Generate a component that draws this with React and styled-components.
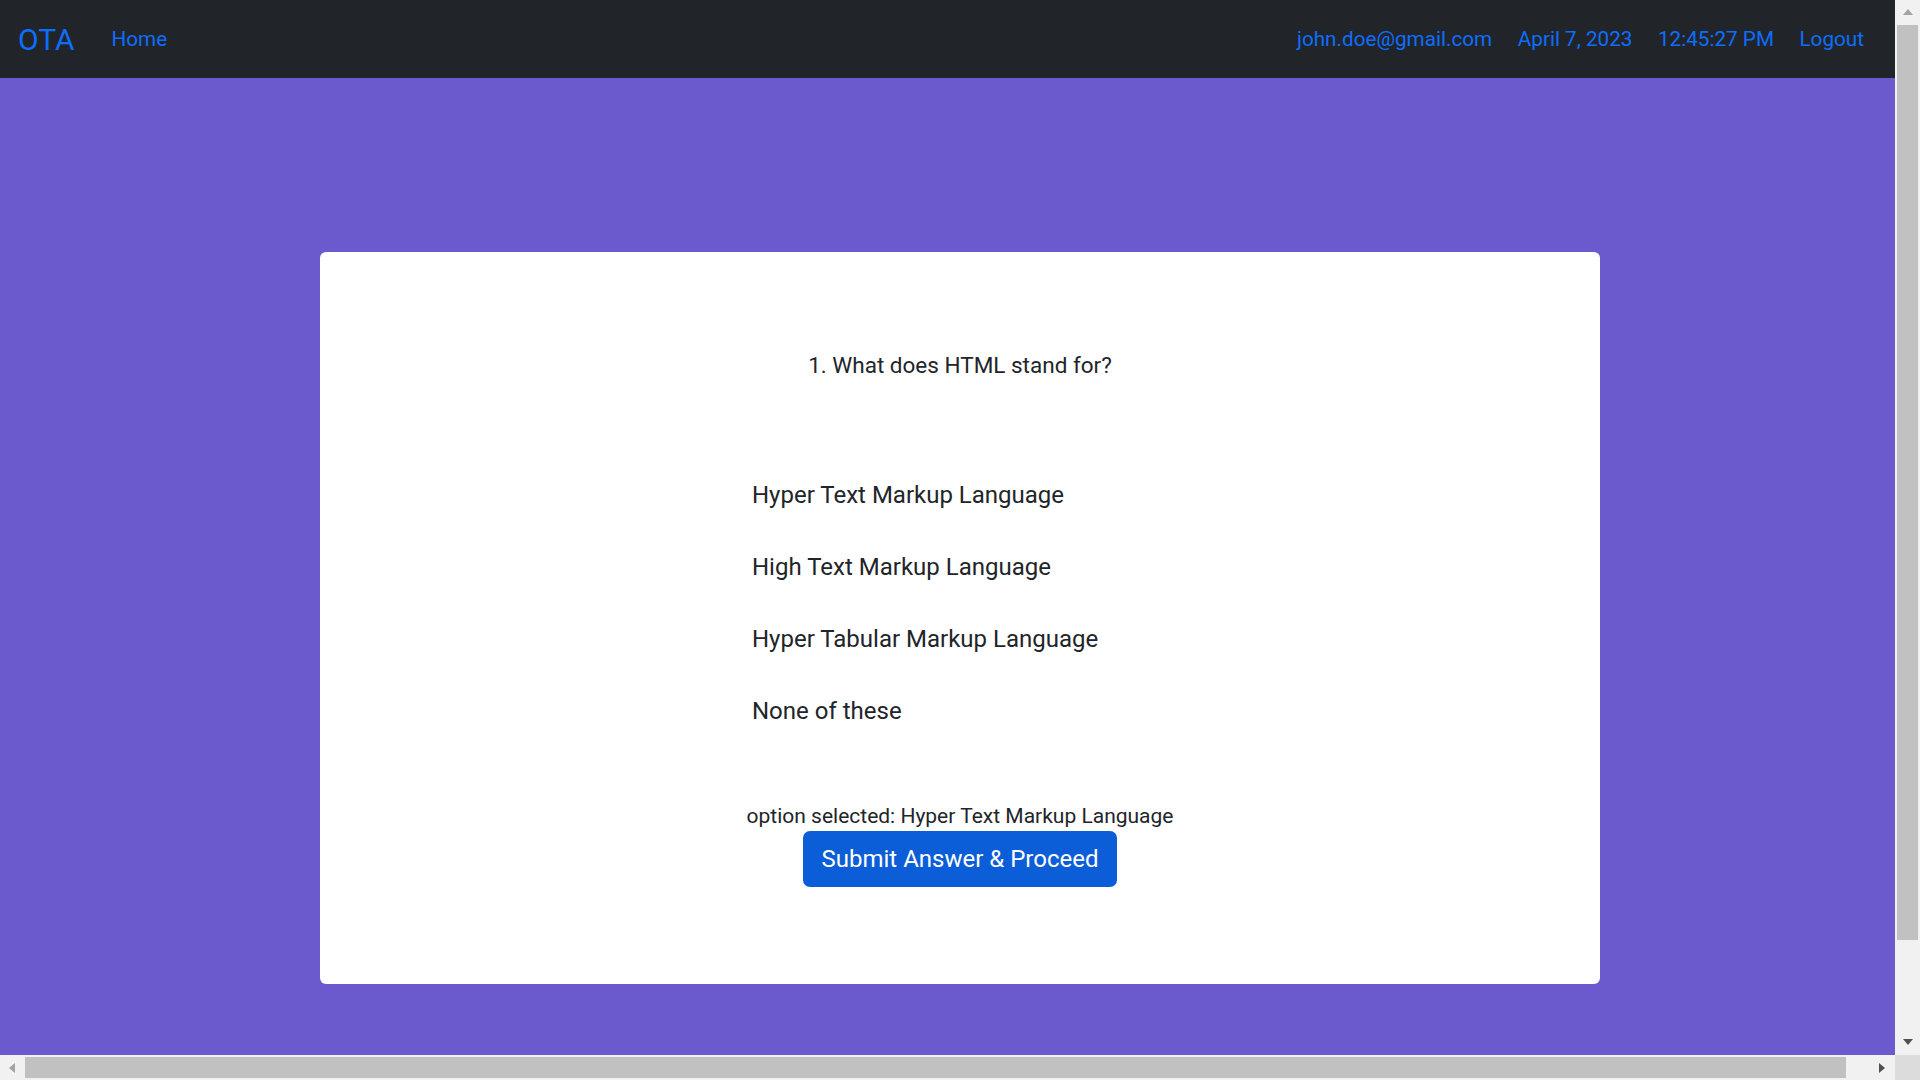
import styled, { createGlobalStyle } from 'styled-components'

const GlobalStyle = createGlobalStyle`
body {
    margin: 0;
    font-family: Roboto, "Liberation Sans", sans-serif;
    color: #212529;
}
`

// janela com barras de rolagem desenhadas (o navegador headless esconde as nativas)
const Frame = styled.div`
display: grid;
grid-template-columns: 1fr 25px;
grid-template-rows: 1fr 25px;
width: 100vw;
height: 100vh;
overflow: hidden;
`
const Viewport = styled.div`
overflow: hidden;
min-width: 0;
min-height: 0;
`
const VScroll = styled.div`
display: flex;
flex-direction: column;
background-color: #f1f1f1;
`
const HScroll = styled.div`
display: flex;
background-color: #f1f1f1;
`
const ScrollButton = styled.div`
flex: none;
width: 25px;
height: 25px;
display: flex;
align-items: center;
justify-content: center;
margin-left: ${p => p.$end ? 'auto' : '0'};
margin-top: ${p => p.$bottom ? 'auto' : '0'};
`
const Arrow = styled.span`
width: 0;
height: 0;
${p => p.$dir === 'up' && `
    border-left: 5.5px solid transparent;
    border-right: 5.5px solid transparent;
    border-bottom: 6px solid ${p.$color};
    margin-top: -1px;
`}
${p => p.$dir === 'down' && `
    border-left: 5.5px solid transparent;
    border-right: 5.5px solid transparent;
    border-top: 6px solid ${p.$color};
    margin-top: -1px;
`}
${p => p.$dir === 'left' && `
    border-top: 5.5px solid transparent;
    border-bottom: 5.5px solid transparent;
    border-right: 6px solid ${p.$color};
    margin-left: -1px;
`}
${p => p.$dir === 'right' && `
    border-top: 5.5px solid transparent;
    border-bottom: 5.5px solid transparent;
    border-left: 6px solid ${p.$color};
    margin-left: -1px;
`}
`
const VThumb = styled.div`
flex: none;
height: 915px;
margin: 0 2px;
background-color: #c1c1c1;
`
const HThumb = styled.div`
flex: none;
width: 1821px;
margin: 2px 0;
background-color: #c1c1c1;
`
const Corner = styled.div`
background-color: #dcdcdc;
`

const Navbar = styled.nav`
display: flex;
align-items: center;
height: 78px;
padding: 0 31px 0 18px;
background-color: #212529;
`
const Brand = styled.a`
font-size: 30px;
color: #0d6efd;
text-decoration: none;
margin-right: 37px;
`
const NavLink = styled.a`
font-size: 20.7px;
color: #0d6efd;
text-decoration: none;
`
const NavRight = styled.div`
display: flex;
gap: 25.5px;
margin-left: auto;
`
const Main = styled.main`
display: flex;
align-items: center;
justify-content: center;
width: 1920px;
height: 1080px;
background-color: #6a5acd;
`
const Card = styled.div`
width: 1280px;
padding: 97px 0 97px;
background-color: #fff;
border-radius: 6px;
display: flex;
flex-direction: column;
align-items: center;
`
const Question = styled.p`
margin: 0 0 94px;
font-size: 22.5px;
line-height: 1.5;
`
const Options = styled.ul`
list-style: none;
margin: 0;
padding: 0;
width: 416px;
display: flex;
flex-direction: column;
gap: 36px;
`
const Option = styled.li`
font-size: 24px;
line-height: 36px;
cursor: pointer;
`
const Selected = styled.p`
margin: 72px 0 0;
font-size: 21px;
line-height: 30px;
`
const SubmitButton = styled.button`
font-family: inherit;
font-size: 24px;
line-height: 36px;
padding: 10px 19px;
color: #fff;
background-color: #0b5ed7;
border: none;
border-radius: 7px;
`

const opcoes = [
    'Hyper Text Markup Language',
    'High Text Markup Language',
    'Hyper Tabular Markup Language',
    'None of these'
]

function App() {
    return (
        <Frame>
            <GlobalStyle />
            <Viewport>
                <Navbar>
                    <Brand href="#">OTA</Brand>
                    <NavLink href="#">Home</NavLink>
                    <NavRight>
                        <NavLink href="#">john.doe@gmail.com</NavLink>
                        <NavLink href="#">April 7, 2023</NavLink>
                        <NavLink href="#">12:45:27 PM</NavLink>
                        <NavLink href="#">Logout</NavLink>
                    </NavRight>
                </Navbar>
                <Main>
                    <Card>
                        <Question>1. What does HTML stand for?</Question>
                        <Options>
                            {opcoes.map(op => (
                                <Option key={op}>{op}</Option>
                            ))}
                        </Options>
                        <Selected>option selected: Hyper Text Markup Language</Selected>
                        <SubmitButton>Submit Answer &amp; Proceed</SubmitButton>
                    </Card>
                </Main>
            </Viewport>
            <VScroll>
                <ScrollButton><Arrow $dir="up" $color="#a3a3a3" /></ScrollButton>
                <VThumb />
                <ScrollButton $bottom><Arrow $dir="down" $color="#505050" /></ScrollButton>
            </VScroll>
            <HScroll>
                <ScrollButton><Arrow $dir="left" $color="#a3a3a3" /></ScrollButton>
                <HThumb />
                <ScrollButton $end><Arrow $dir="right" $color="#505050" /></ScrollButton>
            </HScroll>
            <Corner />
        </Frame>
    )
}
export default App
